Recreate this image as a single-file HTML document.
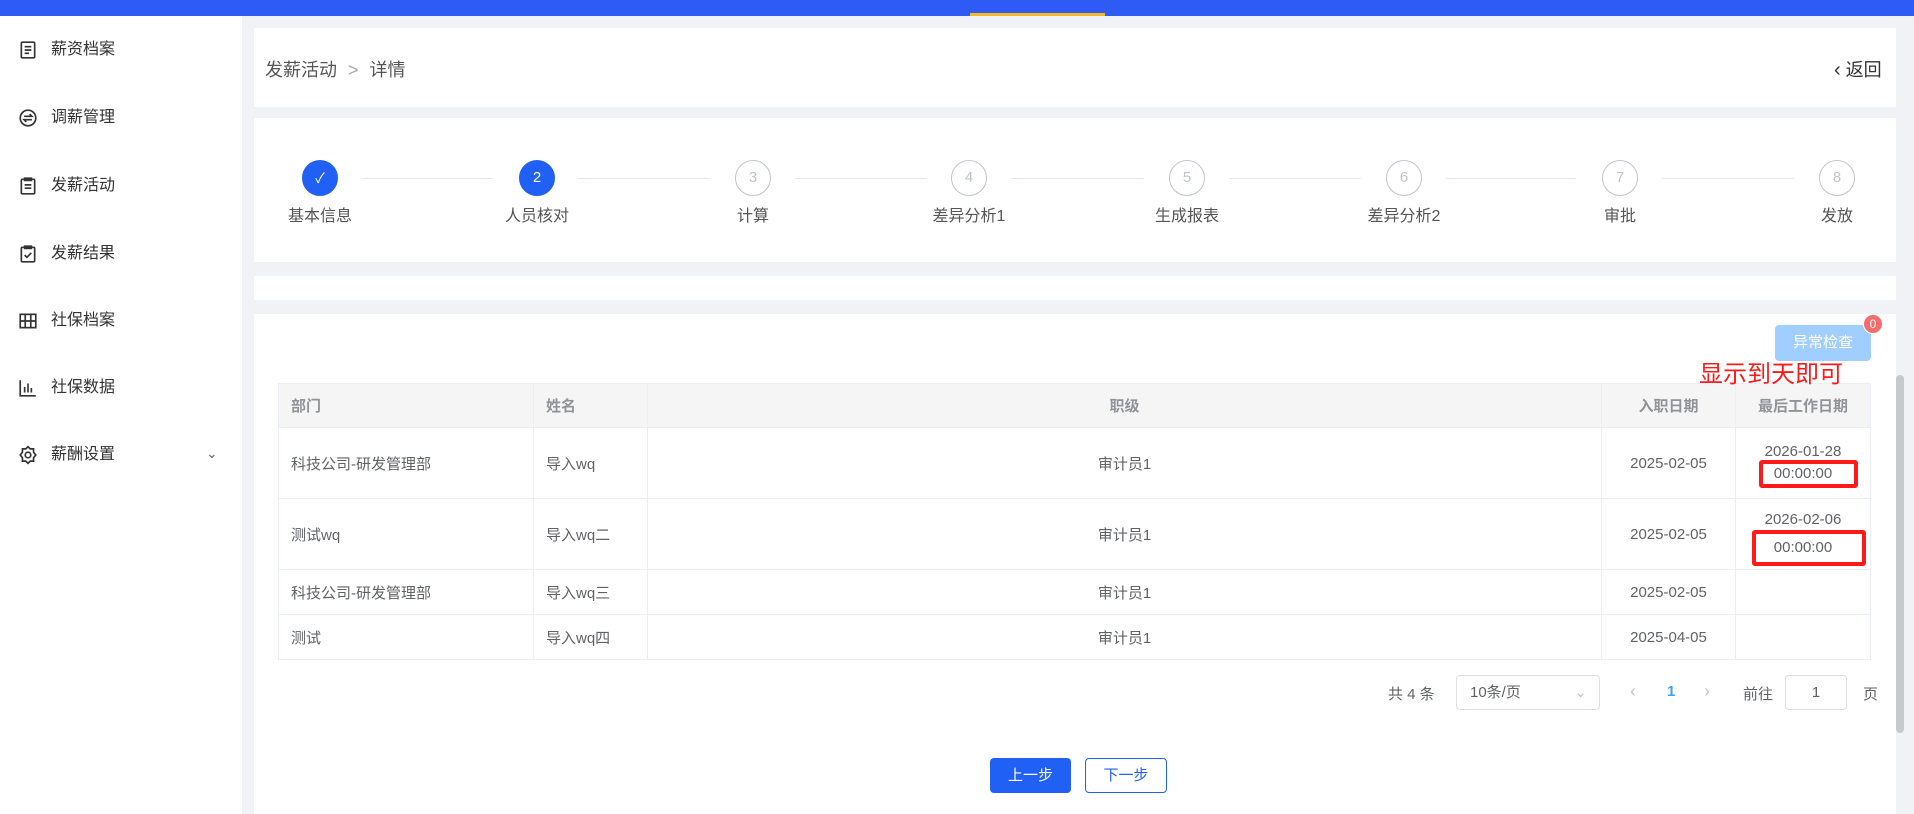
<!DOCTYPE html>
<html><head><meta charset="utf-8"><style>
*{margin:0;padding:0;box-sizing:border-box}
body{width:1914px;height:814px;overflow:hidden;background:#f0f2f5;font-family:"Liberation Sans","Noto Sans CJK SC",sans-serif;color:#333;position:relative}
.a{position:absolute}
.top{left:0;top:0;width:1914px;height:16px;background:#2e5bf5}
.side{left:0;top:16px;width:242px;height:798px;background:#fff}
.si{position:absolute;left:51px;font-size:16px;color:#333;line-height:20px}
.ic{position:absolute;left:-33px;top:0px;width:20px;height:20px}
.card{background:#fff;position:absolute}
.step{position:absolute;top:160px;width:36px;height:36px;border-radius:50%;border:1px solid #c0c4cc;color:#c0c4cc;font-size:15px;text-align:center;line-height:34px;background:#fff}
.sl{position:absolute;top:202px;font-size:16px;color:#555;width:140px;text-align:center}
.line{position:absolute;top:178px;height:1px;background:#e4e7ed}
table{border-collapse:collapse;position:absolute;left:278px;top:383px;width:1593px;font-size:15px;color:#606266}
td,th{border:1px solid #ebeef5;padding:0 12px}
th{background:#f5f5f5;height:44px;font-weight:bold;color:#909399;text-align:left}
</style></head><body>
<div class="a top"></div>
<div class="a" style="left:970px;top:13px;width:135px;height:3px;background:#f5b820"></div>
<div class="a side">
 <div class="si" style="top:24px"><svg class="ic" viewBox="0 0 18 18" fill="none" stroke="#333" stroke-width="1.5"><rect x="3" y="2" width="12" height="14" rx="1"/><path d="M6 6h6M6 9h6M6 12h4"/></svg>薪资档案</div>
 <div class="si" style="top:92px"><svg class="ic" viewBox="0 0 18 18" fill="none" stroke="#333" stroke-width="1.5"><circle cx="9" cy="9" r="7"/><path d="M5.5 7.5h7l-2-2M12.5 10.5h-7l2 2"/></svg>调薪管理</div>
 <div class="si" style="top:160px"><svg class="ic" viewBox="0 0 18 18" fill="none" stroke="#333" stroke-width="1.5"><rect x="3" y="3" width="12" height="13" rx="1"/><path d="M6 2h6v2H6zM6 8h6M6 11h6"/></svg>发薪活动</div>
 <div class="si" style="top:228px"><svg class="ic" viewBox="0 0 18 18" fill="none" stroke="#333" stroke-width="1.5"><rect x="3" y="3" width="12" height="13" rx="1"/><path d="M6 2h6v2H6zM6 10l2 2 4-4"/></svg>发薪结果</div>
 <div class="si" style="top:295px"><svg class="ic" viewBox="0 0 18 18" fill="none" stroke="#333" stroke-width="1.5"><rect x="2" y="3" width="14" height="12"/><path d="M6.5 3v12M11.5 3v12M2 9h14"/></svg>社保档案</div>
 <div class="si" style="top:362px"><svg class="ic" viewBox="0 0 18 18" fill="none" stroke="#333" stroke-width="1.5"><path d="M2 2v14h14M6 13V8M9 13V5M12 13V9"/></svg>社保数据</div>
 <div class="si" style="top:429px"><svg class="ic" viewBox="0 0 18 18" fill="none" stroke="#333" stroke-width="1.5"><circle cx="9" cy="9" r="2.5"/><path d="M9 1.5l2 2h3v3l2 2.5-2 2.5v3h-3l-2 2-2-2H4v-3L2 9l2-2.5v-3h3z"/></svg>薪酬设置<span style="position:absolute;left:155px;top:-2px;color:#666;font-size:14px">&#8964;</span></div>
</div>
<div class="card" style="left:254px;top:28px;width:1642px;height:79px"></div>
<div class="a" style="left:265px;top:56px;font-size:18px;color:#555">发薪活动 <span style="color:#aaa;margin:0 6px">&gt;</span> 详情</div>
<div class="a" style="left:1834px;top:56px;font-size:18px;color:#333"><span style="font-size:20px">&#8249;</span> 返回</div>
<div class="card" style="left:254px;top:118px;width:1642px;height:144px"></div>
<div class="line" style="left:362px;width:130px"></div>
<div class="line" style="left:577px;width:133px"></div>
<div class="line" style="left:795px;width:132px"></div>
<div class="line" style="left:1012px;width:132px"></div>
<div class="line" style="left:1229px;width:132px"></div>
<div class="line" style="left:1446px;width:130px"></div>
<div class="line" style="left:1662px;width:132px"></div>
<div class="step" style="left:302px;background:#2160f5;border-color:#2160f5;color:#fff;font-size:14px">&#10003;</div>
<div class="step" style="left:519px;background:#2160f5;border-color:#2160f5;color:#fff">2</div>
<div class="step" style="left:735px">3</div>
<div class="step" style="left:951px">4</div>
<div class="step" style="left:1169px">5</div>
<div class="step" style="left:1386px">6</div>
<div class="step" style="left:1602px">7</div>
<div class="step" style="left:1819px">8</div>
<div class="sl" style="left:250px">基本信息</div>
<div class="sl" style="left:467px">人员核对</div>
<div class="sl" style="left:683px">计算</div>
<div class="sl" style="left:899px">差异分析1</div>
<div class="sl" style="left:1117px">生成报表</div>
<div class="sl" style="left:1334px">差异分析2</div>
<div class="sl" style="left:1550px">审批</div>
<div class="sl" style="left:1767px">发放</div>
<div class="card" style="left:254px;top:276px;width:1642px;height:24px"></div>
<div class="card" style="left:254px;top:314px;width:1642px;height:500px"></div>
<div class="a" style="left:1896px;top:375px;width:8px;height:358px;background:#c8c9cc;border-radius:4px"></div>
<div class="a" style="left:1775px;top:325px;width:96px;height:36px;background:#a0cfff;border-radius:4px;color:#fff;font-size:15px;text-align:center;line-height:36px">异常检查</div>
<div class="a" style="left:1863px;top:314px;width:20px;height:20px;border-radius:10px;background:#f56c6c;border:1px solid #fff;color:#fff;font-size:12px;text-align:center;line-height:18px">0</div>
<table>
<tr><th style="width:255px">部门</th><th style="width:114px">姓名</th><th style="text-align:center">职级</th><th style="width:134px;text-align:center">入职日期</th><th style="width:135px;text-align:center">最后工作日期</th></tr>
<tr style="height:71px"><td>科技公司-研发管理部</td><td>导入wq</td><td style="text-align:center">审计员1</td><td style="text-align:center">2025-02-05</td><td style="text-align:center;line-height:22px">2026-01-28<br>00:00:00</td></tr>
<tr style="height:71px"><td>测试wq</td><td>导入wq二</td><td style="text-align:center">审计员1</td><td style="text-align:center">2025-02-05</td><td style="text-align:center;line-height:28px">2026-02-06<br>00:00:00</td></tr>
<tr style="height:45px"><td>科技公司-研发管理部</td><td>导入wq三</td><td style="text-align:center">审计员1</td><td style="text-align:center">2025-02-05</td><td></td></tr>
<tr style="height:45px"><td>测试</td><td>导入wq四</td><td style="text-align:center">审计员1</td><td style="text-align:center">2025-04-05</td><td></td></tr>
</table>
<div class="a" style="left:1699px;top:361px;font-size:24px;line-height:28px;color:#ff1a1a;z-index:5">显示到天即可</div>
<div class="a" style="left:1759px;top:460px;width:99px;height:28px;border:4px solid #ff1a1a;border-radius:3px"></div>
<div class="a" style="left:1752px;top:530px;width:114px;height:36px;border:4px solid #ff1a1a;border-radius:3px"></div>
<div class="a" style="left:1388px;top:683px;font-size:15px;color:#606266">共 4 条</div>
<div class="a" style="left:1456px;top:675px;width:144px;height:35px;border:1px solid #dcdfe6;border-radius:4px;font-size:15px;color:#606266;padding-left:13px;line-height:33px">10条/页<span style="position:absolute;right:12px;color:#c0c4cc">&#8964;</span></div>
<div class="a" style="left:1630px;top:681px;font-size:18px;color:#c0c4cc">&#8249;</div>
<div class="a" style="left:1667px;top:683px;font-size:15px;color:#409eff;font-weight:bold">1</div>
<div class="a" style="left:1704px;top:681px;font-size:18px;color:#c0c4cc">&#8250;</div>
<div class="a" style="left:1743px;top:683px;font-size:15px;color:#606266">前往</div>
<div class="a" style="left:1785px;top:675px;width:62px;height:35px;border:1px solid #dcdfe6;border-radius:4px;font-size:15px;color:#606266;text-align:center;line-height:33px">1</div>
<div class="a" style="left:1863px;top:683px;font-size:15px;color:#606266">页</div>
<div class="a" style="left:990px;top:758px;width:81px;height:35px;background:#2160f5;border-radius:4px;color:#fff;font-size:15px;text-align:center;line-height:35px">上一步</div>
<div class="a" style="left:1085px;top:758px;width:82px;height:35px;border:1px solid #2160f5;border-radius:4px;color:#2160f5;font-size:15px;text-align:center;line-height:33px">下一步</div>
</body></html>
